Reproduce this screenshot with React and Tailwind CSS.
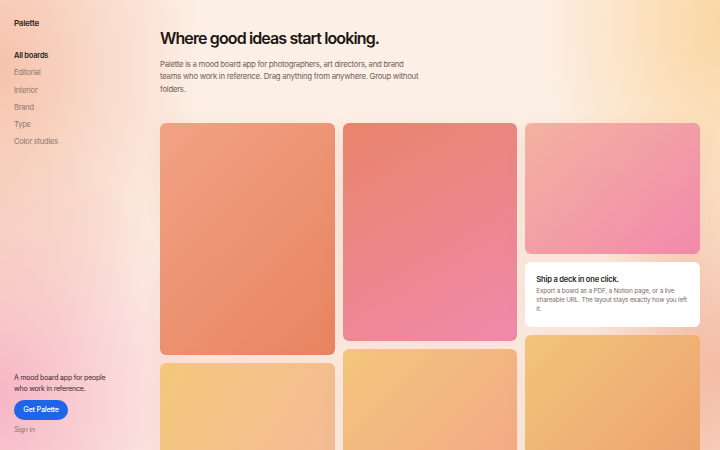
const nav = ['All boards', 'Editorial', 'Interior', 'Brand', 'Type', 'Color studies'];

function Board({ className }) {
  return <div className={`rounded-[6px] shadow-[0_6px_20px_rgba(225,120,90,0.12)] ${className}`}></div>;
}

export default function App() {
  return (
    <div className="h-[450px] w-[720px] overflow-hidden flex font-['Inter',sans-serif] bg-[#fcefe5] bg-[radial-gradient(ellipse_200px_300px_at_0%_15%,#f6c3ac_0%,transparent_100%),radial-gradient(ellipse_200px_260px_at_0%_88%,#f7b6c4_0%,transparent_100%),radial-gradient(ellipse_180px_280px_at_100%_5%,#fbd7a4_0%,transparent_100%),radial-gradient(ellipse_130px_260px_at_100%_82%,#f4bca4_0%,transparent_100%)]">
      {/* Sidebar */}
      <aside className="w-[160px] shrink-0 flex flex-col px-[14px] pt-[17px] pb-[15px]">
        <div className="text-[8px] font-semibold text-[#2a1f1c] tracking-[-0.03em]">Palette</div>
        <nav className="mt-[18px] flex flex-col">
          {nav.map((item, i) => (
            <a
              key={item}
              className={`h-[17.3px] leading-[17.3px] text-[7.5px] tracking-[-0.03em] ${i === 0 ? 'font-semibold text-[#2a1f1c]' : 'text-[#8c7670]'}`}
            >
              {item}
            </a>
          ))}
        </nav>
        <div className="mt-auto">
          <p className="text-[7px] leading-[11px] text-[#3a2a26] tracking-[-0.03em]">
            A mood board app for people
            <br />
            who work in reference.
          </p>
          <button className="mt-[3px] h-[20px] w-[54px] rounded-full bg-[#2064e8] text-white text-[7.3px] font-medium tracking-[-0.03em]">
            Get Palette
          </button>
          <div className="mt-[5px] leading-[10px] text-[7px] text-[#8c7670] tracking-[-0.03em]">Sign in</div>
        </div>
      </aside>

      {/* Main */}
      <main className="flex-1 pr-[20px] pt-[27px]">
        <h1 className="text-[16px] leading-[22px] font-semibold text-[#1c1614] tracking-[-0.055em]">
          Where good ideas start looking.
        </h1>
        <p className="mt-[9px] w-[262px] text-[7.8px] leading-[12.3px] text-[#6f625e] tracking-[-0.035em]">
          Palette is a mood board app for photographers, art directors, and brand teams who work in reference. Drag anything from anywhere. Group without folders.
        </p>

        <div className="mt-[28px] grid grid-cols-3 gap-x-[8px] items-start">
          <div className="flex flex-col gap-[8px]">
            <Board className="h-[232px] bg-[linear-gradient(135deg,#f1a285,#e8845f)]" />
            <Board className="h-[200px] bg-[linear-gradient(120deg,#f4c77b,#f4b89c)]" />
          </div>
          <div className="flex flex-col gap-[8px]">
            <Board className="h-[218px] bg-[linear-gradient(150deg,#e8846a,#f08aab)]" />
            <Board className="h-[200px] bg-[linear-gradient(135deg,#f3c57b,#f3a28a)]" />
          </div>
          <div className="flex flex-col gap-[8px]">
            <Board className="h-[131px] bg-[linear-gradient(140deg,#f3b2a0,#f289ac)]" />
            <div className="rounded-[6px] bg-white pl-[11px] pr-[9px] pt-[13px] pb-[13px] shadow-[0_6px_20px_rgba(225,120,90,0.10)]">
              <div className="text-[7.6px] leading-[10px] font-semibold text-[#2a1f1c] tracking-[-0.03em]">Ship a deck in one click.</div>
              <p className="mt-[2px] text-[6.4px] leading-[9px] text-[#7a6d69] tracking-[-0.025em]">
                Export a board as a PDF, a Notion page, or a live shareable URL. The layout stays exactly how you left it.
              </p>
            </div>
            <Board className="h-[200px] bg-[linear-gradient(135deg,#f2c47b,#eb9b6c)]" />
          </div>
        </div>
      </main>
    </div>
  );
}
